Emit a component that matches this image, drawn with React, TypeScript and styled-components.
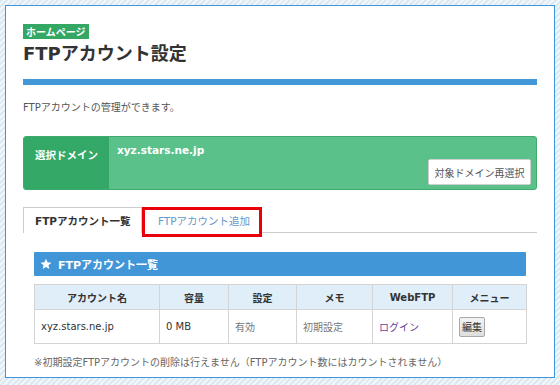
import React from 'react';
import styled, { createGlobalStyle } from 'styled-components';

const GlobalStyle = createGlobalStyle`
  html, body {
    margin: 0;
    padding: 0;
  }
  body {
    width: 560px;
    height: 385px;
    overflow: hidden;
    font-family: "DejaVu Sans", "Noto Sans CJK JP", sans-serif;
    color: #333;
    background: repeating-linear-gradient(
      -45deg,
      #f1f6fa 0px,
      #f1f6fa 2px,
      #dce9f3 2px,
      #dce9f3 4px
    );
  }
`;

const Page = styled.div`
  padding: 5px;
`;

const Panel = styled.main`
  box-sizing: border-box;
  width: 550px;
  height: 373px;
  background: #fff;
  border: 1px solid #3f95dc;
  padding: 18px 17px 0;
  display: flex;
  flex-direction: column;
`;

const Badge = styled.span`
  align-self: flex-start;
  background: #33a763;
  color: #fff;
  font-size: 10px;
  font-weight: bold;
  line-height: 15px;
  height: 15px;
  padding: 0 3px 0 3px;
  font-family: "Noto Sans CJK JP", sans-serif;
`;

const Title = styled.h1`
  margin: 2px 0 0;
  font-size: 18px;
  line-height: 26px;
  font-weight: bold;
  color: #333;
`;

const TitleBar = styled.div`
  height: 6px;
  background: #4298d8;
  margin-top: 12px;
`;

const Lead = styled.p`
  margin: 16px 0 0;
  font-size: 10px;
  line-height: 14px;
  color: #555;
`;

const DomainBox = styled.section`
  margin-top: 21px;
  height: 54px;
  display: flex;
  border-radius: 3px;
  overflow: hidden;
  background: #5bc18a;
  border: 1px solid #40a96c;
  box-sizing: border-box;
`;

const DomainLabel = styled.div`
  width: 85px;
  background: #34a866;
  color: #fff;
  font-size: 10.5px;
  font-weight: bold;
  padding: 10px 0 0 11px;
  box-sizing: border-box;
  white-space: nowrap;
`;

const DomainValue = styled.div`
  flex: 1;
  display: flex;
  flex-direction: column;
  padding: 7px 5px 4px 8px;
  color: #fff;
  font-size: 10.5px;
  font-weight: bold;
`;

const ReselectButton = styled.button`
  align-self: flex-end;
  margin-top: auto;
  height: 26px;
  width: 103px;
  padding: 0;
  background: #fff;
  border: 1px solid #cfcfcf;
  border-radius: 2px;
  font-family: inherit;
  font-size: 10px;
  color: #555;
`;

const Tabs = styled.nav`
  margin-top: 17px;
  display: flex;
  height: 25px;
  border-bottom: 1px solid #cccccc;
`;

const Tab = styled.div<{ $active?: boolean; $marked?: boolean }>`
  box-sizing: border-box;
  flex: none;
  white-space: nowrap;
  height: ${(p) => (p.$active ? '26px' : '30px')};
  width: ${(p) => (p.$active ? '119px' : '120px')};
  padding: ${(p) => (p.$active ? '0 0 0 11px' : '0 0 4px 13px')};
  display: flex;
  align-items: center;
  font-size: 10.5px;
  font-weight: ${(p) => (p.$active ? 'bold' : 'normal')};
  color: ${(p) => (p.$active ? '#333' : '#6a97c9')};
  background: #fff;
  border: ${(p) =>
    p.$active ? '1px solid #cccccc' : p.$marked ? '3px solid #e8000b' : 'none'};
  border-bottom: ${(p) =>
    p.$active ? 'none' : p.$marked ? '3px solid #e8000b' : 'none'};
`;

const Section = styled.section`
  padding: 19px 11px 0;
`;

const SectionHeader = styled.h2`
  margin: 0;
  height: 24px;
  background: #4196d8;
  color: #fff;
  font-size: 11px;
  font-weight: bold;
  display: flex;
  align-items: center;
  gap: 6px;
  padding-left: 6px;
  border-radius: 1px;
`;

const StarIcon = () => (
  <svg width="12" height="12" viewBox="0 0 24 24" aria-hidden="true">
    <path
      fill="#fff"
      d="M12 1.5l3.1 7.1 7.7.7-5.8 5.1 1.7 7.6L12 18l-6.7 4 1.7-7.6-5.8-5.1 7.7-.7z"
    />
  </svg>
);

const Table = styled.table`
  margin-top: 8px;
  width: 100%;
  border-collapse: collapse;
  table-layout: fixed;
  font-size: 10px;
`;

const Th = styled.th`
  height: 24px;
  background: #dfeef9;
  border: 1px solid #d4d4d4;
  font-weight: bold;
  color: #333;
  padding: 0;
  text-align: center;
`;

const Td = styled.td<{ $muted?: boolean }>`
  height: 33px;
  border: 1px solid #d4d4d4;
  padding: 0 6px;
  white-space: nowrap;
  color: ${(p) => (p.$muted ? '#777' : '#333')};
`;

const LoginLink = styled.a`
  color: #6b3f9c;
  text-decoration: none;
`;

const EditButton = styled.button`
  height: 20px;
  width: 26px;
  padding: 0;
  font-family: inherit;
  font-size: 10px;
  color: #333;
  background: linear-gradient(#f3f3f3, #dedede);
  border: 1px solid #a8a8a8;
  border-radius: 2px;
`;

const Note = styled.p`
  margin: 10px 0 0;
  font-size: 10px;
  color: #666;
  white-space: nowrap;
`;

const columns = [
  { label: 'アカウント名', w: 125 },
  { label: '容量', w: 69 },
  { label: '設定', w: 68 },
  { label: 'メモ', w: 76 },
  { label: 'WebFTP', w: 80 },
  { label: 'メニュー', w: 74 },
];

const App = () => (
  <Page>
    <GlobalStyle />
    <Panel>
      <Badge>ホームページ</Badge>
      <Title>FTPアカウント設定</Title>
      <TitleBar />
      <Lead>FTPアカウントの管理ができます。</Lead>
      <DomainBox>
        <DomainLabel>選択ドメイン</DomainLabel>
        <DomainValue>
          xyz.stars.ne.jp
          <ReselectButton>対象ドメイン再選択</ReselectButton>
        </DomainValue>
      </DomainBox>
      <Tabs>
        <Tab $active>FTPアカウント一覧</Tab>
        <Tab $marked>FTPアカウント追加</Tab>
      </Tabs>
      <Section>
        <SectionHeader>
          <StarIcon />
          FTPアカウント一覧
        </SectionHeader>
        <Table>
          <colgroup>
            {columns.map((c) => (
              <col key={c.label} style={{ width: c.w }} />
            ))}
          </colgroup>
          <thead>
            <tr>
              {columns.map((c) => (
                <Th key={c.label}>{c.label}</Th>
              ))}
            </tr>
          </thead>
          <tbody>
            <tr>
              <Td>xyz.stars.ne.jp</Td>
              <Td>0 MB</Td>
              <Td $muted>有効</Td>
              <Td $muted>初期設定</Td>
              <Td>
                <LoginLink href="#">ログイン</LoginLink>
              </Td>
              <Td>
                <EditButton>編集</EditButton>
              </Td>
            </tr>
          </tbody>
        </Table>
        <Note>
          ※初期設定FTPアカウントの削除は行えません（FTPアカウント数にはカウントされません）
        </Note>
      </Section>
    </Panel>
  </Page>
);

export default App;
